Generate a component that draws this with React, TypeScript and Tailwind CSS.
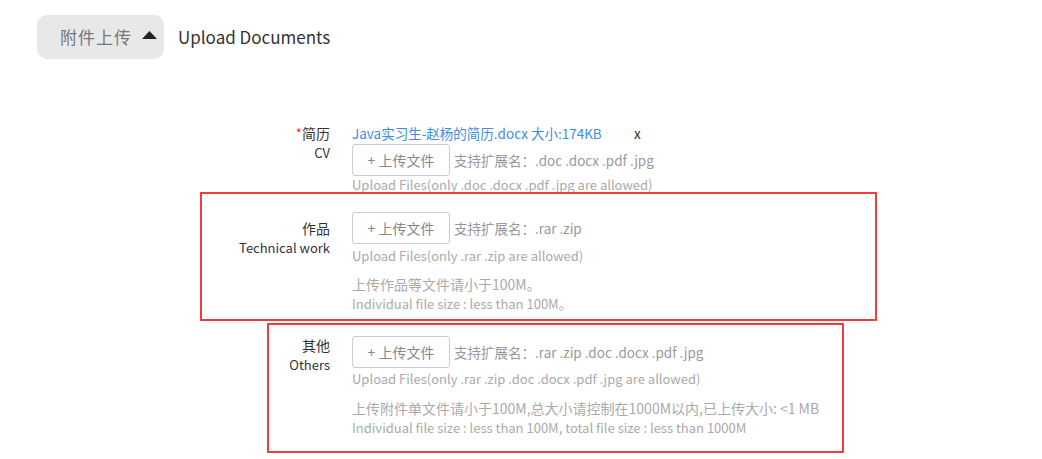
import React from "react";

const font = { fontFamily: '"Noto Sans CJK SC", "Noto Sans", sans-serif' };

function UploadBtn() {
  return (
    <div className="flex h-[32px] w-[98px] items-center justify-center rounded-[3px] border border-[#c8ccd4] text-[14px] text-[#888]">
      + 上传文件
    </div>
  );
}

export default function App() {
  return (
    <div className="relative h-[459px] w-[1042px] bg-white text-[13px] text-[#333]" style={font}>
      <div className="flex items-center pl-[37px] pt-[15px]">
        <div className="flex h-[44px] w-[127px] items-center rounded-[10px] bg-[#e8e8e8] pl-[23px]">
          <span className="text-[17px] tracking-[1px] text-[#777]">附件上传</span>
          <svg width="15" height="8" viewBox="0 0 15 8" className="ml-[10px] mt-[-4px]">
            <polygon points="7.5,0 15,8 0,8" fill="#222" />
          </svg>
        </div>
        <span className="ml-[14px] text-[17px] text-[#333]">Upload Documents</span>
      </div>

      {/* Row 1 */}
      <div className="mt-[64px] flex">
        <div className="w-[330px] text-right leading-[20px]">
          <div className="text-[14px]">
            <span className="text-[#f04040]">*</span>简历
          </div>
          <div>CV</div>
        </div>
        <div className="ml-[22px]">
          <div className="flex h-[20px] items-center text-[13.5px] text-[#3a8ee6]">
            <span className="w-[282px]">Java实习生-赵杨的简历.docx 大小:174KB</span>
            <span className="text-[#333]">x</span>
          </div>
          <div className="mt-[1px] flex items-center">
            <UploadBtn />
            <span className="ml-[4px] text-[13.5px] text-[#999]">支持扩展名：.doc .docx .pdf .jpg</span>
          </div>
          <div className="text-[13px] leading-[18px] text-[#aaa]">Upload Files(only .doc .docx .pdf .jpg are allowed)</div>
        </div>
      </div>

      {/* Row 2 */}
      <div className="mt-[18px] flex">
        <div className="w-[330px] pt-[6px] text-right leading-[20px]">
          <div className="text-[14px]">作品</div>
          <div>Technical work</div>
        </div>
        <div className="ml-[22px]">
          <div className="flex items-center">
            <UploadBtn />
            <span className="ml-[4px] text-[13.5px] text-[#999]">支持扩展名：.rar .zip</span>
          </div>
          <div className="mt-[2px] leading-[20px] text-[#aaa]">Upload Files(only .rar .zip are allowed)</div>
          <div className="mt-[9px] leading-[19px] text-[#aaa]">
            <div className="text-[14px]">上传作品等文件请小于100M。</div>
            <div>Individual file size : less than 100M。</div>
          </div>
        </div>
      </div>

      {/* Row 3 */}
      <div className="mt-[23px] flex">
        <div className="w-[330px] text-right leading-[20px]">
          <div className="-mt-[1px] text-[14px]">其他</div>
          <div>Others</div>
        </div>
        <div className="ml-[22px]">
          <div className="flex items-center">
            <UploadBtn />
            <span className="ml-[4px] text-[13.5px] text-[#999]">支持扩展名：.rar .zip .doc .docx .pdf .jpg</span>
          </div>
          <div className="mt-[1px] leading-[20px] text-[#aaa]">Upload Files(only .rar .zip .doc .docx .pdf .jpg are allowed)</div>
          <div className="mt-[10px] leading-[19px] text-[#aaa]">
            <div className="text-[14px]">上传附件单文件请小于100M,总大小请控制在1000M以内,已上传大小: &lt;1 MB</div>
            <div>Individual file size : less than 100M, total file size : less than 1000M</div>
          </div>
        </div>
      </div>

      {/* annotation boxes */}
      <div className="pointer-events-none absolute left-[200px] top-[192px] h-[129px] w-[677px] border-[2px] border-[#f23c3c]" />
      <div className="pointer-events-none absolute left-[267px] top-[323px] h-[130px] w-[577px] border-[2px] border-[#f23c3c]" />
    </div>
  );
}
